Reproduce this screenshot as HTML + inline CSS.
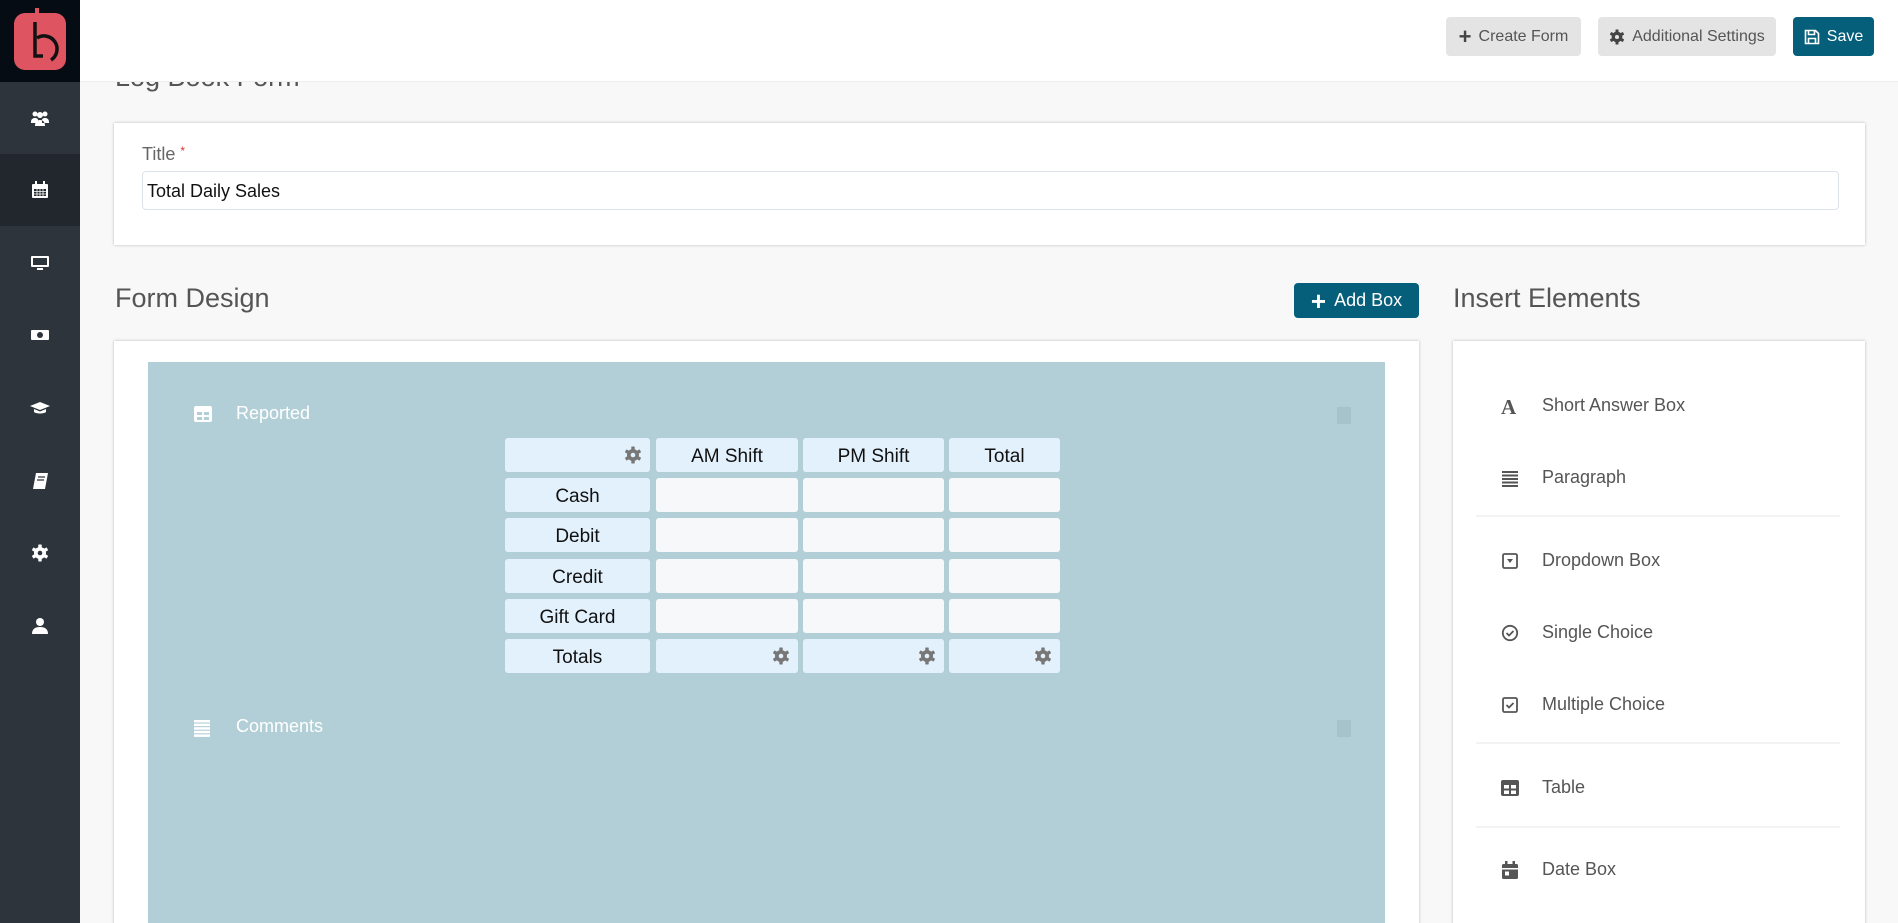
<!DOCTYPE html>
<html><head><meta charset="utf-8"><style>
*{box-sizing:border-box;margin:0;padding:0}
html,body{width:1898px;height:923px;overflow:hidden}
body{background:#f8f8f8;font-family:"Liberation Sans",sans-serif;position:relative;color:#555}
.abs{position:absolute}
.sb{left:0;top:0;width:80px;height:923px;background:#2d343c}
.logo{left:0;top:0;width:80px;height:82px;background:#050c14}
.si{position:absolute;left:0;width:80px;height:72px;display:flex;align-items:center;justify-content:center}
.btn{position:absolute;top:17px;height:39px;border-radius:4px;background:#e4e4e4;color:#555;font-size:16px;display:flex;align-items:center;justify-content:center;gap:7px}
.card{background:#fff;box-shadow:0 0 3px rgba(0,0,0,.25)}
h2{position:absolute;font-weight:normal;font-size:27px;color:#555}
.cell{position:absolute;height:34px;border-radius:3px;background:#e3f1fc;display:flex;align-items:center;justify-content:center;font-size:19px;color:#111;padding-top:3px}
.cell.w{background:#f7f8fa}
.it{position:absolute;left:1501px;font-size:18px;color:#555;display:flex;align-items:center}
.it svg{width:18px;height:18px;margin-right:23px}
.dv{position:absolute;left:1476px;width:364px;height:2px;background:#f3f3f3}
</style></head><body>
<svg width="0" height="0" style="position:absolute"><defs>
<g id="gear"><g><rect x="7.3" y="0.5" width="3.4" height="17" rx=".6"/><rect x="7.3" y="0.5" width="3.4" height="17" rx=".6" transform="rotate(60 9 9)"/><rect x="7.3" y="0.5" width="3.4" height="17" rx=".6" transform="rotate(120 9 9)"/><circle cx="9" cy="9" r="6"/></g></g>
</defs></svg>
<div class="abs sb"></div>
<div class="abs logo">
<svg width="80" height="82" viewBox="0 0 80 82"><rect x="14" y="13" width="52" height="57" rx="11" fill="#de5461"/><path d="M37 8v14" stroke="#de5461" stroke-width="4"/><path d="M35 22v34h8" stroke="#111" stroke-width="3.5" fill="none"/><path d="M37 38a11 11 0 1 1 14 22" stroke="#111" stroke-width="3.5" fill="none"/></svg>
</div>
<div class="si" style="top:82px"><svg width="20" height="18" viewBox="0 0 20 18" fill="#fff"><circle cx="5" cy="5" r="2.5"/><circle cx="15" cy="5" r="2.5"/><circle cx="10" cy="6" r="3"/><path d="M1 13c0-3 2-4 4-4s3 1 3 2v3H1zM19 13c0-3-2-4-4-4s-3 1-3 2v3h7zM5 17c0-4 2-6 5-6s5 2 5 6z"/></svg></div>
<div class="si" style="top:154px;background:#22272d"><svg width="18" height="18" viewBox="0 0 18 18" fill="#fff"><rect x="1" y="3" width="16" height="14" rx="1"/><rect x="4" y="0" width="2" height="5"/><rect x="12" y="0" width="2" height="5"/><path d="M3 8h12v7H3z" fill="#22272d"/><path d="M3 10.5h12M3 13h12M6 8v7M9 8v7M12 8v7" stroke="#fff" stroke-width=".8"/></svg></div>
<div class="si" style="top:227px"><svg width="20" height="16" viewBox="0 0 20 16" fill="#fff"><rect x="1" y="1" width="18" height="11" rx="1"/><rect x="3" y="3" width="14" height="7" fill="#2d343c"/><rect x="7" y="13" width="6" height="2"/></svg></div>
<div class="si" style="top:299px"><svg width="20" height="14" viewBox="0 0 20 14" fill="#fff"><rect x="1" y="2" width="18" height="10" rx="1"/><circle cx="10" cy="7" r="3" fill="#2d343c"/></svg></div>
<div class="si" style="top:372px"><svg width="20" height="14" viewBox="0 0 20 14" fill="#fff"><path d="M10 1L0 5l10 4 10-4zM4 8v3c2 2 10 2 12 0V8l-6 2.5z"/></svg></div>
<div class="si" style="top:445px"><svg width="18" height="18" viewBox="0 0 18 18" fill="#fff"><path d="M5 1h12l-3 16H2z"/><path d="M7 5h7M6 8h7" stroke="#2d343c" stroke-width="1.2"/></svg></div>
<div class="si" style="top:517px"><svg width="18" height="18" viewBox="0 0 18 18" fill="#fff"><use href="#gear"/><circle cx="9" cy="9" r="2.3" fill="#2d343c"/></svg></div>
<div class="si" style="top:590px"><svg width="16" height="18" viewBox="0 0 16 18" fill="#fff"><circle cx="8" cy="5" r="4"/><path d="M0 17c0-5 3-7 8-7s8 2 8 7z"/></svg></div>

<h2 style="left:115px;top:62px">Log Book Form</h2>
<div class="abs" style="left:80px;top:0;width:1818px;height:82px;background:#fff;border-bottom:1px solid #eee"></div>
<div class="btn" style="left:1446px;width:135px"><span style="font-size:22px;font-weight:bold;color:#444">+</span>Create Form</div>
<div class="btn" style="left:1598px;width:178px"><svg width="16" height="16" viewBox="0 0 18 18" fill="#444"><use href="#gear"/><circle cx="9" cy="9" r="2.3" fill="#e4e4e4"/></svg>Additional Settings</div>
<div class="btn" style="left:1793px;width:81px;background:#055e7a;color:#fff"><svg width="16" height="16" viewBox="0 0 16 16" fill="none" stroke="#fff" stroke-width="1.6"><path d="M1.5 1.5h10l3 3v10h-13z"/><path d="M4.5 1.5v4h6v-4M4.5 14.5v-5h7v5"/></svg>Save</div>

<div class="abs card" style="left:114px;top:123px;width:1751px;height:122px"></div>
<div class="abs" style="left:142px;top:144px;font-size:18px;color:#666">Title <span style="color:#d33;font-size:12px;vertical-align:top">*</span></div>
<div class="abs" style="left:142px;top:171px;width:1697px;height:39px;border:1px solid #dde3e8;border-radius:4px;background:#fff;font-size:18px;color:#111;padding:9px 4px">Total Daily Sales</div>

<h2 style="left:115px;top:283px">Form Design</h2>
<div class="abs" style="left:1294px;top:283px;width:125px;height:35px;background:#055e7a;border-radius:4px;color:#fff;font-size:18px;display:flex;align-items:center;justify-content:center;gap:8px"><span style="font-size:26px;font-weight:bold;line-height:1">+</span>Add Box</div>
<h2 style="left:1453px;top:283px">Insert Elements</h2>

<div class="abs card" style="left:114px;top:341px;width:1305px;height:590px"></div>
<div class="abs" style="left:148px;top:362px;width:1237px;height:561px;background:#b2cfd7"></div>
<svg class="abs" style="left:194px;top:406px" width="18" height="16" viewBox="0 0 18 16" fill="#fff"><rect x="0" y="0" width="18" height="16" rx="2"/><path d="M3 6h5v3H3zM10 6h5v3h-5zM3 11h5v3H3zM10 11h5v3h-5z" fill="#b2cfd7"/></svg>
<div class="abs" style="left:236px;top:403px;font-size:18px;color:#fff">Reported</div>
<div class="abs" style="left:1337px;top:407px;width:14px;height:17px;background:#a6c3cb"></div>
<svg class="abs" style="left:194px;top:720px" width="16" height="17" viewBox="0 0 16 17" fill="#fff"><rect y="0" width="16" height="2.5"/><rect y="3.6" width="16" height="2.5"/><rect y="7.2" width="16" height="2.5"/><rect y="10.8" width="16" height="2.5"/><rect y="14.4" width="16" height="2.5"/></svg>
<div class="abs" style="left:236px;top:716px;font-size:18px;color:#fff">Comments</div>
<div class="abs" style="left:1337px;top:720px;width:14px;height:17px;background:#a6c3cb"></div>

<div class="cell" style="left:505px;top:438px;width:145px;justify-content:flex-end;padding:0 8px 0 0"><svg width="18" height="18" viewBox="0 0 18 18" fill="#777"><use href="#gear"/><circle cx="9" cy="9" r="2.3" fill="#e3f1fc"/></svg></div>
<div class="cell" style="left:656px;top:438px;width:142px">AM Shift</div>
<div class="cell" style="left:803px;top:438px;width:141px">PM Shift</div>
<div class="cell" style="left:949px;top:438px;width:111px">Total</div>

<div class="cell" style="left:505px;top:478px;width:145px">Cash</div>
<div class="cell w" style="left:656px;top:478px;width:142px"></div><div class="cell w" style="left:803px;top:478px;width:141px"></div><div class="cell w" style="left:949px;top:478px;width:111px"></div>
<div class="cell" style="left:505px;top:518px;width:145px">Debit</div>
<div class="cell w" style="left:656px;top:518px;width:142px"></div><div class="cell w" style="left:803px;top:518px;width:141px"></div><div class="cell w" style="left:949px;top:518px;width:111px"></div>
<div class="cell" style="left:505px;top:559px;width:145px">Credit</div>
<div class="cell w" style="left:656px;top:559px;width:142px"></div><div class="cell w" style="left:803px;top:559px;width:141px"></div><div class="cell w" style="left:949px;top:559px;width:111px"></div>
<div class="cell" style="left:505px;top:599px;width:145px">Gift Card</div>
<div class="cell w" style="left:656px;top:599px;width:142px"></div><div class="cell w" style="left:803px;top:599px;width:141px"></div><div class="cell w" style="left:949px;top:599px;width:111px"></div>
<div class="cell" style="left:505px;top:639px;width:145px">Totals</div>
<div class="cell" style="left:656px;top:639px;width:142px;justify-content:flex-end;padding:0 8px 0 0"><svg width="18" height="18" viewBox="0 0 18 18" fill="#777"><use href="#gear"/><circle cx="9" cy="9" r="2.3" fill="#e3f1fc"/></svg></div>
<div class="cell" style="left:803px;top:639px;width:141px;justify-content:flex-end;padding:0 8px 0 0"><svg width="18" height="18" viewBox="0 0 18 18" fill="#777"><use href="#gear"/><circle cx="9" cy="9" r="2.3" fill="#e3f1fc"/></svg></div>
<div class="cell" style="left:949px;top:639px;width:111px;justify-content:flex-end;padding:0 8px 0 0"><svg width="18" height="18" viewBox="0 0 18 18" fill="#777"><use href="#gear"/><circle cx="9" cy="9" r="2.3" fill="#e3f1fc"/></svg></div>

<div class="abs card" style="left:1453px;top:341px;width:412px;height:590px"></div>
<div class="it" style="top:395px"><svg viewBox="0 0 18 18"><text x="0" y="17" font-family="Liberation Serif" font-weight="bold" font-size="21" fill="#555">A</text></svg>Short Answer Box</div>
<div class="it" style="top:467px"><svg viewBox="0 0 18 18" fill="#555"><rect x="1" y="2" width="16" height="2"/><rect x="1" y="5.5" width="16" height="2"/><rect x="1" y="9" width="16" height="2"/><rect x="1" y="12.5" width="16" height="2"/><rect x="1" y="16" width="16" height="2"/></svg>Paragraph</div>
<div class="dv" style="top:515px"></div>
<div class="it" style="top:550px"><svg viewBox="0 0 18 18"><rect x="2" y="2" width="14" height="14" rx="1.5" fill="none" stroke="#555" stroke-width="1.8"/><path d="M6 7h6l-3 4z" fill="#555"/></svg>Dropdown Box</div>
<div class="it" style="top:622px"><svg viewBox="0 0 18 18" fill="none" stroke="#555" stroke-width="1.8"><circle cx="9" cy="9" r="7.2"/><path d="M5.5 9l2.5 2.5 4.5-4.5"/></svg>Single Choice</div>
<div class="it" style="top:694px"><svg viewBox="0 0 18 18" fill="none" stroke="#555" stroke-width="1.8"><rect x="2" y="2" width="14" height="14" rx="1.5"/><path d="M5.5 9l2.5 2.5 4.5-4.5"/></svg>Multiple Choice</div>
<div class="dv" style="top:742px"></div>
<div class="it" style="top:777px"><svg viewBox="0 0 18 18" fill="#555"><rect x="0" y="1" width="18" height="16" rx="2"/><path d="M3 6h5v3.5H3zM10 6h5v3.5h-5zM3 11.5h5V15H3zM10 11.5h5V15h-5z" fill="#fff"/></svg>Table</div>
<div class="dv" style="top:826px"></div>
<div class="it" style="top:859px"><svg viewBox="0 0 18 18" fill="#555"><rect x="1" y="3" width="16" height="15" rx="1.5"/><rect x="4" y="0" width="2.5" height="4"/><rect x="11.5" y="0" width="2.5" height="4"/><rect x="1" y="7" width="16" height="1.5" fill="#fff"/><rect x="4" y="10.5" width="4" height="4" fill="#fff"/></svg>Date Box</div>
</body></html>
